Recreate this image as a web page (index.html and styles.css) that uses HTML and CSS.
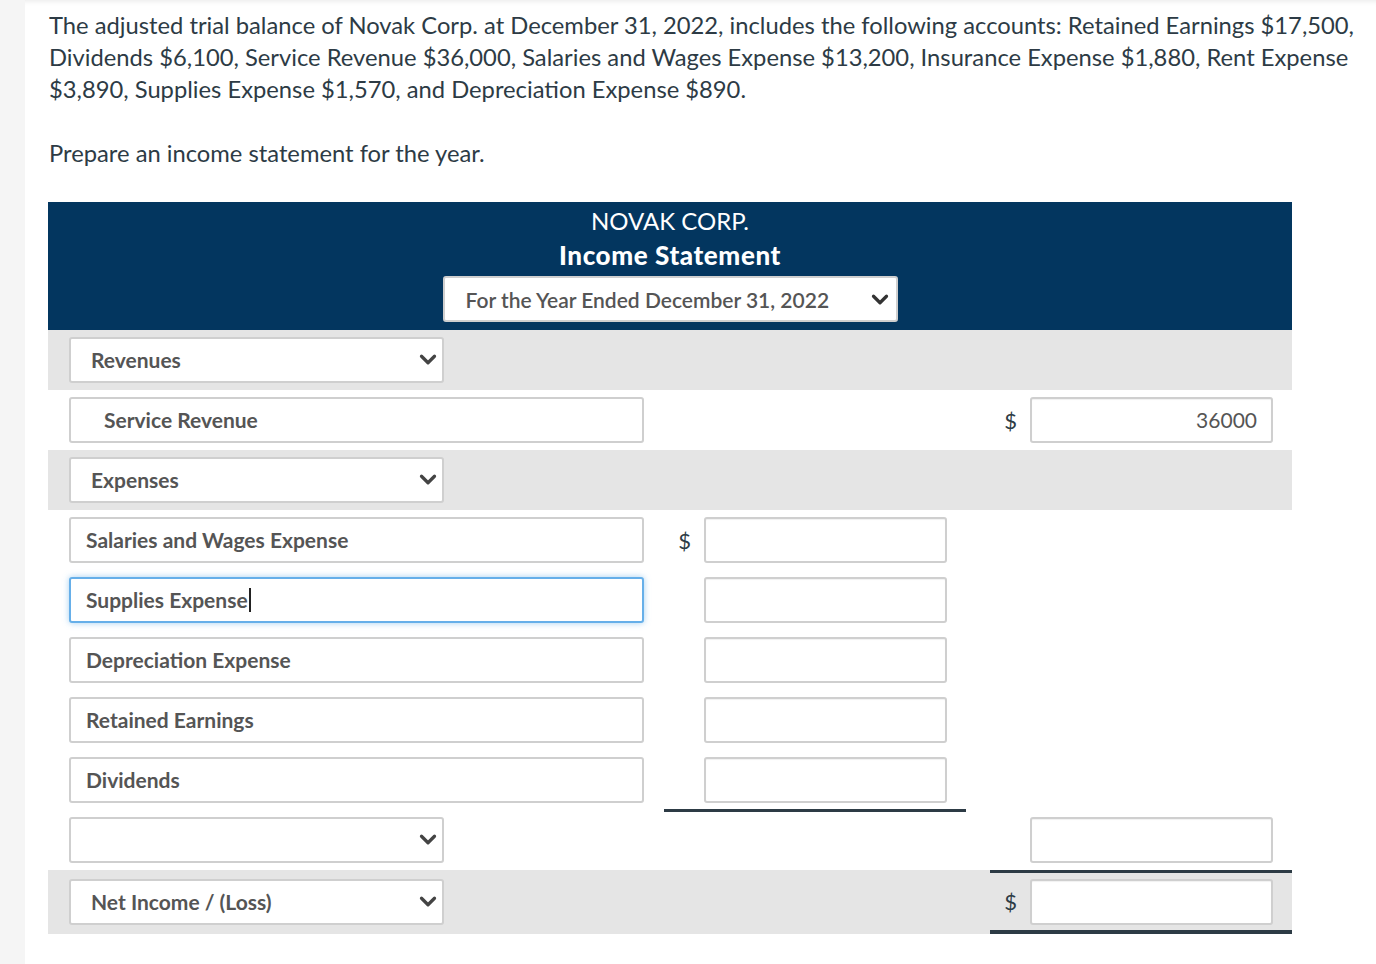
FILE: index.html
```html
<!DOCTYPE html>
<html>
<head>
<meta charset="utf-8">
<link rel="stylesheet" href="styles.css">
</head>
<body>
<div class="page">
  <p class="q">The adjusted trial balance of Novak Corp. at December 31, 2022, includes the following accounts: Retained Earnings $17,500, Dividends $6,100, Service Revenue $36,000, Salaries and Wages Expense $13,200, Insurance Expense $1,880, Rent Expense $3,890, Supplies Expense $1,570, and Depreciation Expense $890.</p>
  <p class="q q2">Prepare an income statement for the year.</p>

  <div class="stmt">
    <div class="head">
      <div class="co">NOVAK CORP.</div>
      <div class="title">Income Statement</div>
      <div class="sel period"><span>For the Year Ended December 31, 2022</span>
        <svg class="chev" viewBox="0 0 16 12" width="18" height="13"><path d="M2 3l6 6 6-6" fill="none" stroke="#333" stroke-width="3" stroke-linecap="round" stroke-linejoin="round"/></svg>
      </div>
    </div>

    <div class="row gray">
      <div class="lab"><div class="sel short"><span>Revenues</span><svg class="chev" viewBox="0 0 16 12" width="18" height="13"><path d="M2 3l6 6 6-6" fill="none" stroke="#444" stroke-width="3" stroke-linecap="round" stroke-linejoin="round"/></svg></div></div>
      <div class="c2"></div>
      <div class="gap"></div>
      <div class="c3"></div>
    </div>

    <div class="row">
      <div class="lab"><div class="txt long indent">Service Revenue</div></div>
      <div class="c2"></div>
      <div class="gap"></div>
      <div class="c3"><span class="dol">$</span><div class="num">36000</div></div>
    </div>

    <div class="row gray">
      <div class="lab"><div class="sel short"><span>Expenses</span><svg class="chev" viewBox="0 0 16 12" width="18" height="13"><path d="M2 3l6 6 6-6" fill="none" stroke="#444" stroke-width="3" stroke-linecap="round" stroke-linejoin="round"/></svg></div></div>
      <div class="c2"></div>
      <div class="gap"></div>
      <div class="c3"></div>
    </div>

    <div class="row">
      <div class="lab"><div class="txt long">Salaries and Wages Expense</div></div>
      <div class="c2"><span class="dol">$</span><div class="num"></div></div>
      <div class="gap"></div>
      <div class="c3"></div>
    </div>

    <div class="row">
      <div class="lab"><div class="txt long focus">Supplies Expense<span class="caret"></span></div></div>
      <div class="c2"><div class="num"></div></div>
      <div class="gap"></div>
      <div class="c3"></div>
    </div>

    <div class="row">
      <div class="lab"><div class="txt long">Depreciation Expense</div></div>
      <div class="c2"><div class="num"></div></div>
      <div class="gap"></div>
      <div class="c3"></div>
    </div>

    <div class="row">
      <div class="lab"><div class="txt long">Retained Earnings</div></div>
      <div class="c2"><div class="num"></div></div>
      <div class="gap"></div>
      <div class="c3"></div>
    </div>

    <div class="row">
      <div class="lab"><div class="txt long">Dividends</div></div>
      <div class="c2 uline"><div class="num"></div></div>
      <div class="gap"></div>
      <div class="c3"></div>
    </div>

    <div class="row">
      <div class="lab"><div class="sel short"><span></span><svg class="chev" viewBox="0 0 16 12" width="18" height="13"><path d="M2 3l6 6 6-6" fill="none" stroke="#444" stroke-width="3" stroke-linecap="round" stroke-linejoin="round"/></svg></div></div>
      <div class="c2"></div>
      <div class="gap"></div>
      <div class="c3"><div class="num"></div></div>
    </div>

    <div class="row gray net">
      <div class="lab"><div class="sel short"><span>Net Income / (Loss)</span><svg class="chev" viewBox="0 0 16 12" width="18" height="13"><path d="M2 3l6 6 6-6" fill="none" stroke="#444" stroke-width="3" stroke-linecap="round" stroke-linejoin="round"/></svg></div></div>
      <div class="c2"></div>
      <div class="gap"></div>
      <div class="c3 total"><span class="dol">$</span><div class="num"></div></div>
    </div>
  </div>
</div>
</body>
</html>
```

FILE: styles.css
```css
html, body {
  margin: 0;
  padding: 0;
  background: #f5f5f5;
  font-family: Lato, "Open Sans", sans-serif;
}
.page {
  margin-left: 25px;
  min-height: 964px;
  background: #fff;
  padding: 9px 0 0 23px;
  box-shadow: inset 0 6px 6px -6px rgba(0,0,0,0.12);
  box-sizing: border-box;
}
.q {
  margin: 0 0 0 1px;
  width: 1320px;
  font-size: 23.75px;
  line-height: 32px;
  color: #2d3b45;
}
.q2 {
  margin-top: 32px;
}
.stmt {
  margin-top: 33px;
  width: 1244px;
}
.head {
  background: #03365f;
  color: #fff;
  height: 128px;
  box-sizing: border-box;
  display: flex;
  flex-direction: column;
  align-items: center;
  padding-top: 5px;
}
.co {
  font-size: 24px;
  line-height: 28px;
}
.title {
  font-size: 26px;
  font-weight: 900;
  line-height: 32px;
  margin-top: 4px;
  letter-spacing: 0.6px;
}
.sel, .txt, .num {
  background: #fff;
  border: 2px solid #cfcfcf;
  border-radius: 3px;
  height: 46px;
  box-sizing: border-box;
  font-size: 21px;
  color: #555;
  font-weight: 700;
  display: flex;
  align-items: center;
  padding-bottom: 1px;
}
.sel {
  justify-content: space-between;
  padding: 0 5px 1px 20px;
}
.period {
  width: 455px;
  margin-top: 5px;
  padding: 1px 7px 0 21px;
}
.period span { font-weight: 600; color: #555; }
.chev { flex: none; }
.short { width: 375px; }
.long { width: 575px; padding-left: 15px; }
.indent { padding-left: 33px; }
.focus {
  border-color: #66afe9;
  box-shadow: 0 0 6px rgba(102,175,233,0.6);
}
.caret {
  display: inline-block;
  width: 2px;
  height: 24px;
  background: #222;
  margin-left: 1px;
}
.row {
  display: flex;
  height: 60px;
  align-items: stretch;
}
.gray { background: #e5e5e5; }
.lab {
  width: 616px;
  box-sizing: border-box;
  padding-left: 21px;
  display: flex;
  align-items: center;
}
.c2, .c3 {
  width: 302px;
  box-sizing: border-box;
  padding-right: 19px;
  display: flex;
  align-items: center;
  justify-content: flex-end;
}
.gap { width: 24px; }
.num {
  width: 243px;
  justify-content: flex-end;
  padding-right: 14px;
  font-weight: 400;
  box-shadow: inset 0 1px 1px rgba(0,0,0,0.06);
}
.dol {
  font-size: 22px;
  color: #2d3b45;
  margin-right: 13px;
}
.uline {
  height: 62px;
  margin-bottom: -2px;
  padding-top: 1px;
  border-bottom: 3px solid #2d3b45;
}
.net { height: 64px; }
.total {
  border-top: 3px solid #2d3b45;
  border-bottom: 4px solid #2d3b45;
}
```
